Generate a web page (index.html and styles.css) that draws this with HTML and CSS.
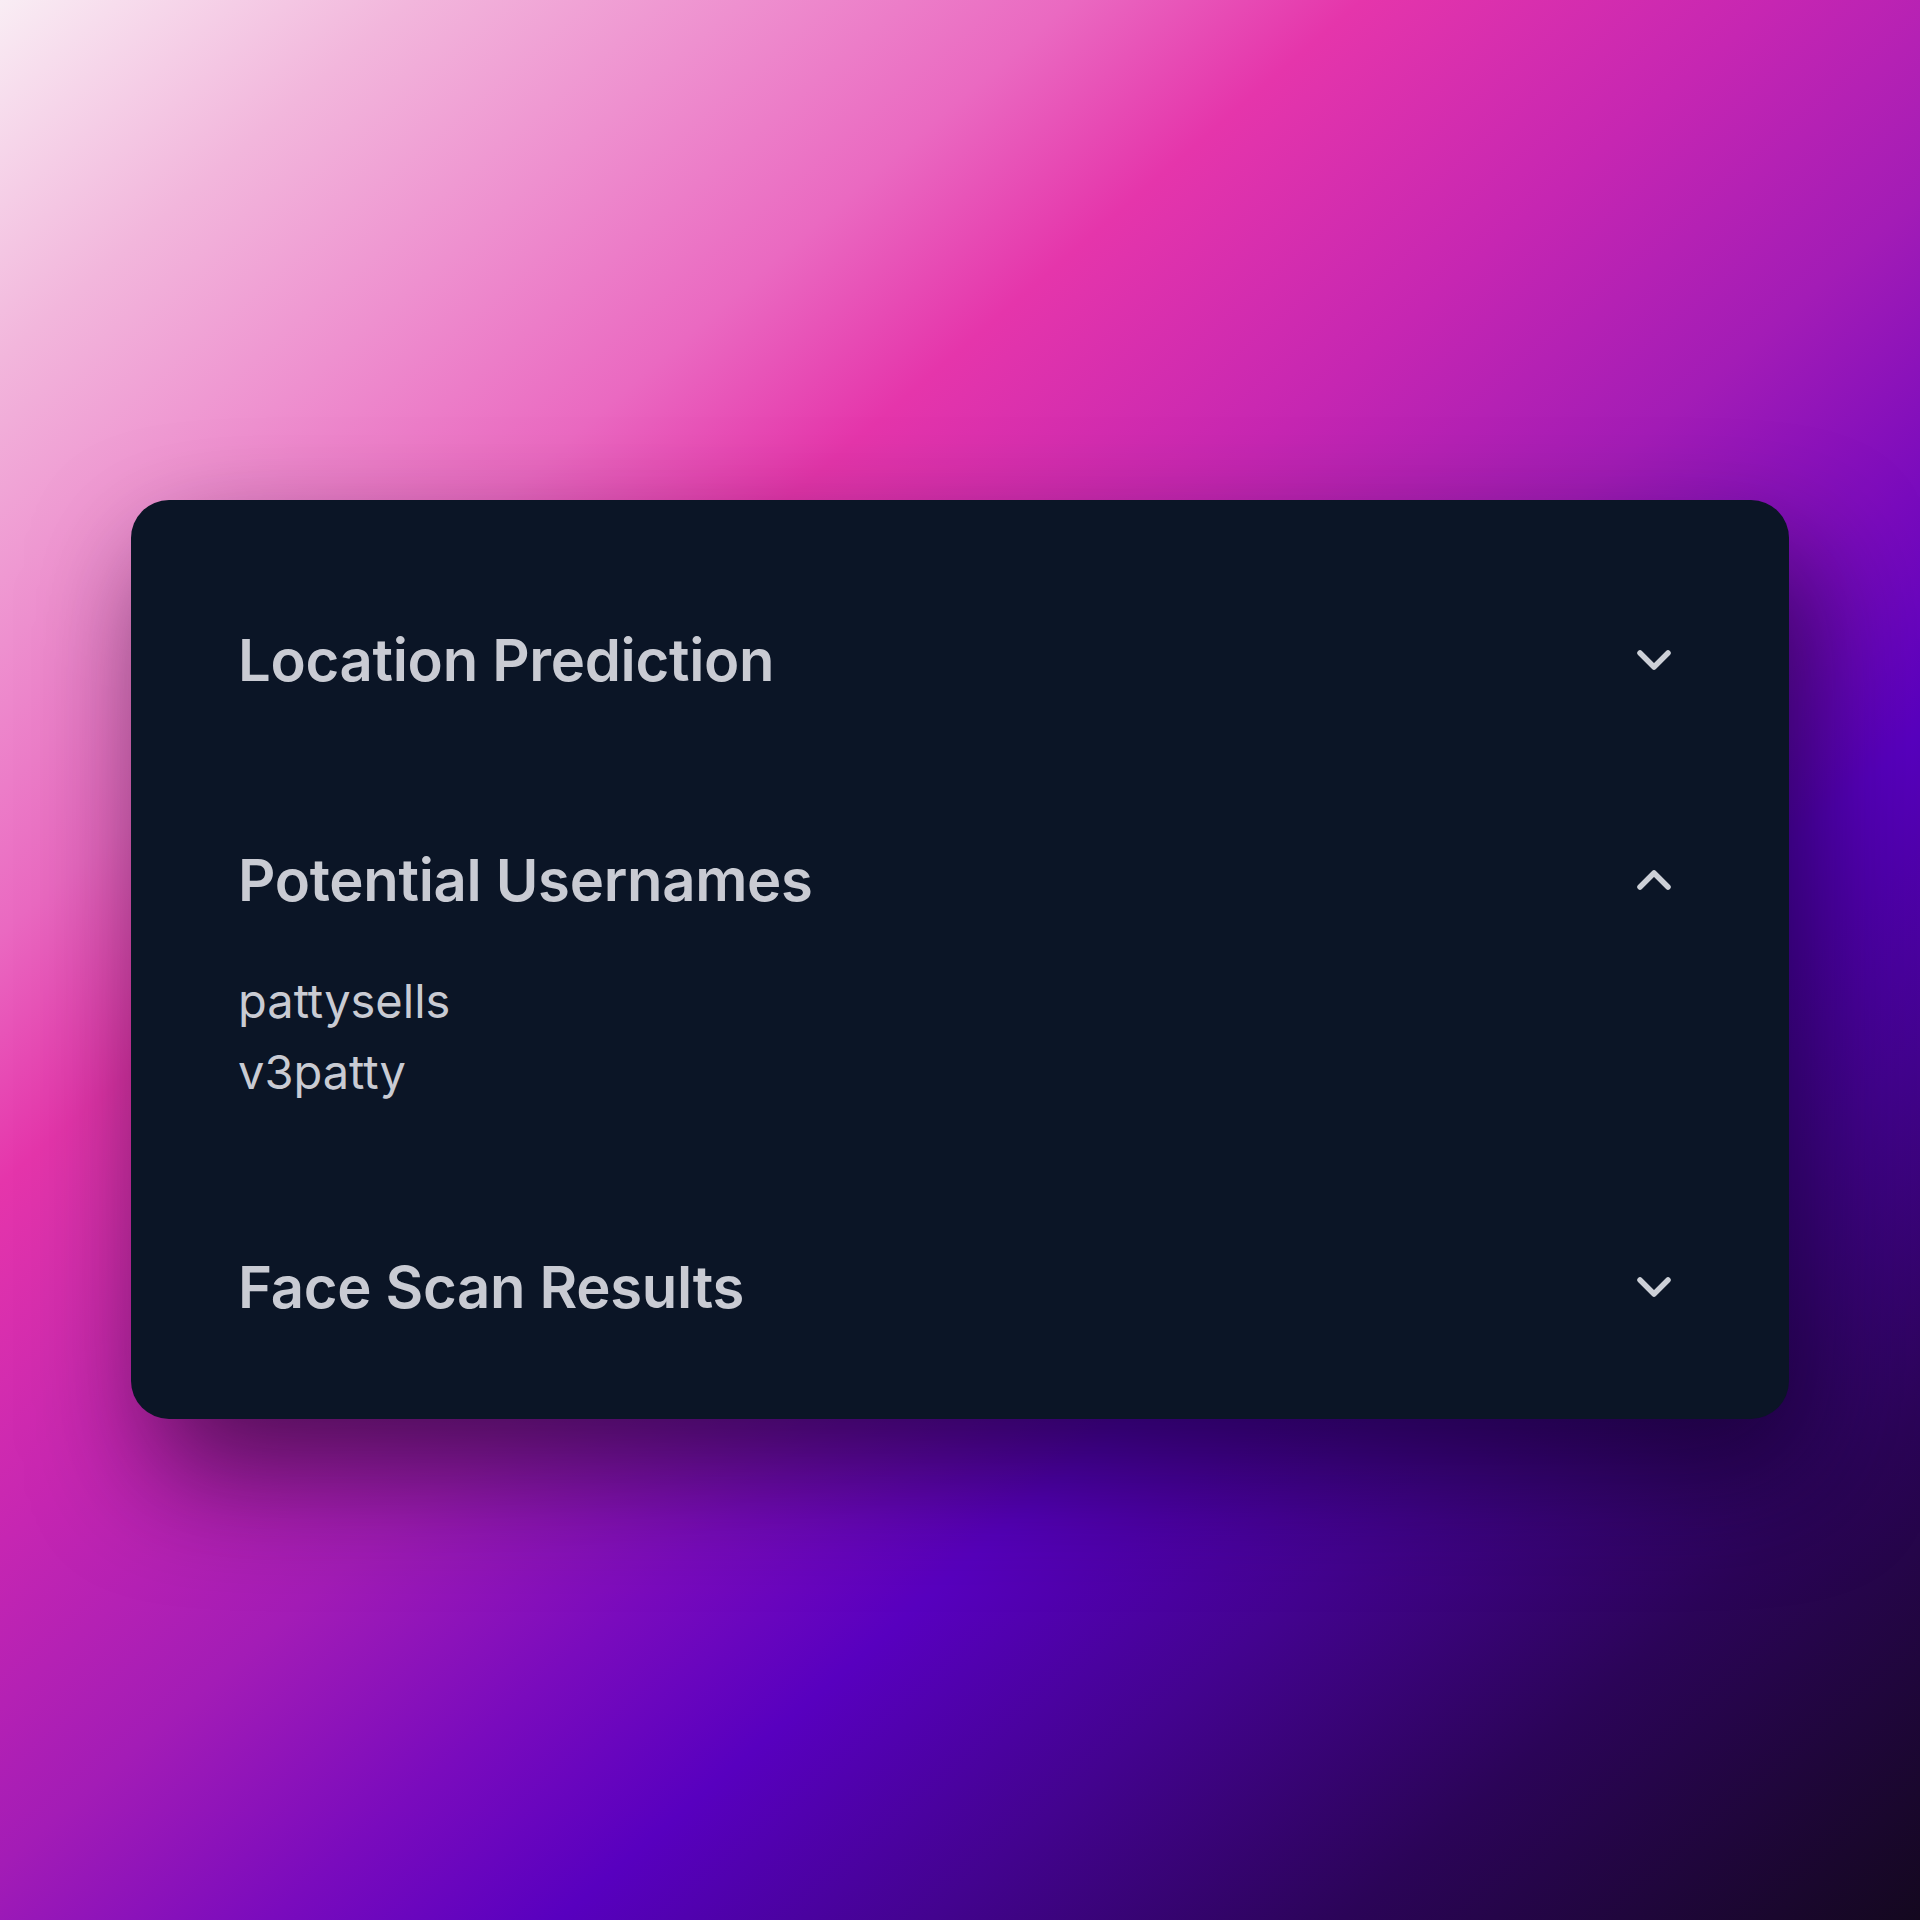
FILE: index.html
```html
<!DOCTYPE html>
<html lang="en">
<head>
<meta charset="utf-8">
<title>Accordion</title>
<link rel="stylesheet" href="styles.css">
</head>
<body>
<div class="stage">
  <section class="card">
    <div class="item">
      <div class="item-header">
        <h2 class="item-title">Location Prediction</h2>
        <svg class="chevron" width="36" height="24" viewBox="0 0 36 24"><polyline points="4,5 18,19 32,5"/></svg>
      </div>
    </div>
    <div class="item open">
      <div class="item-header">
        <h2 class="item-title">Potential Usernames</h2>
        <svg class="chevron" width="36" height="24" viewBox="0 0 36 24"><polyline points="4,19 18,5 32,19"/></svg>
      </div>
      <div class="item-content">
        <div class="username">pattysells</div>
        <div class="username">v3patty</div>
      </div>
    </div>
    <div class="item">
      <div class="item-header">
        <h2 class="item-title">Face Scan Results</h2>
        <svg class="chevron" width="36" height="24" viewBox="0 0 36 24"><polyline points="4,5 18,19 32,5"/></svg>
      </div>
    </div>
  </section>
</div>
</body>
</html>
```

FILE: styles.css
```css
* { box-sizing: border-box; }
html, body { margin: 0; padding: 0; }
body {
  width: 1920px;
  height: 1920px;
  overflow: hidden;
  font-family: Inter, "Noto Sans", sans-serif;
  background: linear-gradient(139deg,
    #f9edf4 0%,
    #f2b6dc 10%,
    #ee90cf 18%,
    #ea69c1 26%,
    #e535ab 33%,
    #c626b2 43%,
    #a31cb6 52%,
    #7a0bbd 60%,
    #5800bf 67%,
    #43038f 76%,
    #2b0458 86%,
    #14081f 100%);
}
.stage {
  padding: 500px 0 0 131px;
}
.card {
  width: 1658px;
  background: #0b1526;
  border-radius: 38px;
  padding: 80px 117px 52px 107px;
  display: flex;
  flex-direction: column;
  gap: 60px;
  box-shadow: 20px 55px 115px rgba(10, 0, 25, 0.6);
}
.item-header {
  height: 160px;
  display: flex;
  align-items: center;
  justify-content: space-between;
}
.item-title {
  margin: 0;
  font-size: 58px;
  font-weight: 600;
  color: #c9cbd3;
  letter-spacing: -0.3px;
}
.chevron {
  flex: none;
}
.chevron polyline {
  fill: none;
  stroke: #cdd0d7;
  stroke-width: 5.5;
  stroke-linecap: round;
  stroke-linejoin: round;
}
.item-content {
  padding: 5px 0 40px;
}
.username {
  font-size: 47px;
  line-height: 71px;
  font-weight: 400;
  color: #c9cbd3;
}
```
